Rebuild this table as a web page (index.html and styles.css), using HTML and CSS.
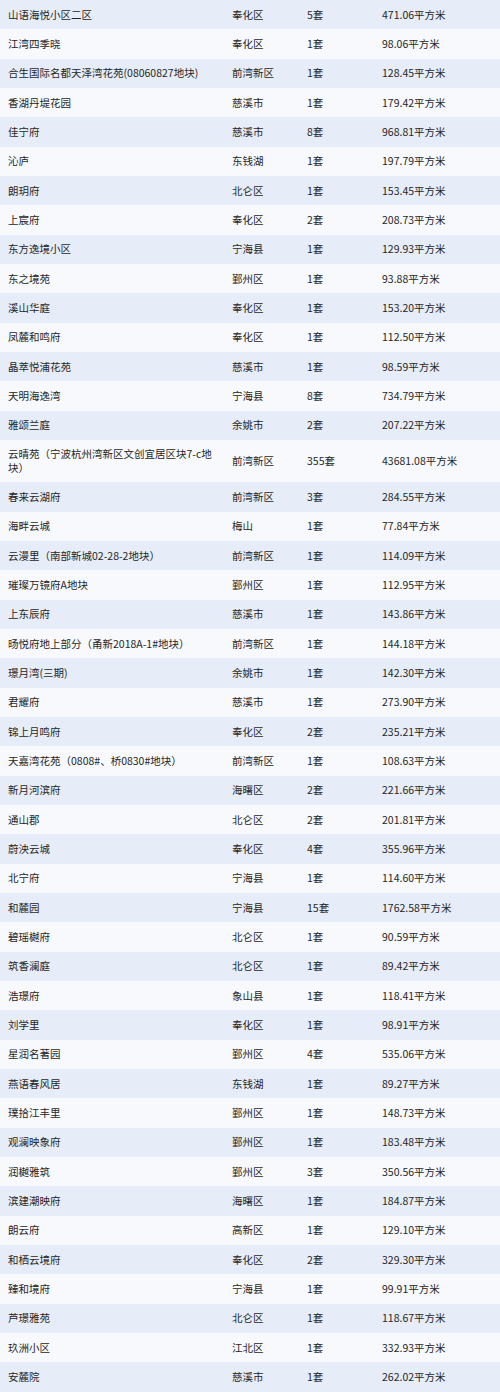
FILE: index.html
```html
<!DOCTYPE html>
<html lang="zh-CN">
<head>
<meta charset="utf-8">
<title>楼盘成交表</title>
<link rel="stylesheet" href="styles.css">
</head>
<body>
<div class="table">
  <div class="row"><div class="name">山语海悦小区二区</div><div>奉化区</div><div>5套</div><div>471.06平方米</div></div>
  <div class="row"><div class="name">江湾四季晓</div><div>奉化区</div><div>1套</div><div>98.06平方米</div></div>
  <div class="row"><div class="name">合生国际名都天泽湾花苑(08060827地块)</div><div>前湾新区</div><div>1套</div><div>128.45平方米</div></div>
  <div class="row"><div class="name">香湖丹堤花园</div><div>慈溪市</div><div>1套</div><div>179.42平方米</div></div>
  <div class="row"><div class="name">佳宁府</div><div>慈溪市</div><div>8套</div><div>968.81平方米</div></div>
  <div class="row"><div class="name">沁庐</div><div>东钱湖</div><div>1套</div><div>197.79平方米</div></div>
  <div class="row"><div class="name">朗玥府</div><div>北仑区</div><div>1套</div><div>153.45平方米</div></div>
  <div class="row"><div class="name">上宸府</div><div>奉化区</div><div>2套</div><div>208.73平方米</div></div>
  <div class="row"><div class="name">东方逸境小区</div><div>宁海县</div><div>1套</div><div>129.93平方米</div></div>
  <div class="row"><div class="name">东之境苑</div><div>鄞州区</div><div>1套</div><div>93.88平方米</div></div>
  <div class="row"><div class="name">溪山华庭</div><div>奉化区</div><div>1套</div><div>153.20平方米</div></div>
  <div class="row"><div class="name">凤麓和鸣府</div><div>奉化区</div><div>1套</div><div>112.50平方米</div></div>
  <div class="row"><div class="name">晶萃悦浦花苑</div><div>慈溪市</div><div>1套</div><div>98.59平方米</div></div>
  <div class="row"><div class="name">天明海逸湾</div><div>宁海县</div><div>8套</div><div>734.79平方米</div></div>
  <div class="row"><div class="name">雅颂兰庭</div><div>余姚市</div><div>2套</div><div>207.22平方米</div></div>
  <div class="row tall"><div class="name">云晴苑（宁波杭州湾新区文创宜居区块7-c地块）</div><div>前湾新区</div><div>355套</div><div>43681.08平方米</div></div>
  <div class="row"><div class="name">春来云湖府</div><div>前湾新区</div><div>3套</div><div>284.55平方米</div></div>
  <div class="row"><div class="name">海畔云城</div><div>梅山</div><div>1套</div><div>77.84平方米</div></div>
  <div class="row"><div class="name">云漫里（南部新城02-28-2地块）</div><div>前湾新区</div><div>1套</div><div>114.09平方米</div></div>
  <div class="row"><div class="name">璀璨万镜府A地块</div><div>鄞州区</div><div>1套</div><div>112.95平方米</div></div>
  <div class="row"><div class="name">上东辰府</div><div>慈溪市</div><div>1套</div><div>143.86平方米</div></div>
  <div class="row"><div class="name">旸悦府地上部分（甬新2018A-1#地块）</div><div>前湾新区</div><div>1套</div><div>144.18平方米</div></div>
  <div class="row"><div class="name">璟月湾(三期)</div><div>余姚市</div><div>1套</div><div>142.30平方米</div></div>
  <div class="row"><div class="name">君耀府</div><div>慈溪市</div><div>1套</div><div>273.90平方米</div></div>
  <div class="row"><div class="name">锦上月鸣府</div><div>奉化区</div><div>2套</div><div>235.21平方米</div></div>
  <div class="row"><div class="name">天嘉湾花苑（0808#、桥0830#地块）</div><div>前湾新区</div><div>1套</div><div>108.63平方米</div></div>
  <div class="row"><div class="name">新月河滨府</div><div>海曙区</div><div>2套</div><div>221.66平方米</div></div>
  <div class="row"><div class="name">通山郡</div><div>北仑区</div><div>2套</div><div>201.81平方米</div></div>
  <div class="row"><div class="name">蔚泱云城</div><div>奉化区</div><div>4套</div><div>355.96平方米</div></div>
  <div class="row"><div class="name">北宁府</div><div>宁海县</div><div>1套</div><div>114.60平方米</div></div>
  <div class="row"><div class="name">和麓园</div><div>宁海县</div><div>15套</div><div>1762.58平方米</div></div>
  <div class="row"><div class="name">碧瑶樾府</div><div>北仑区</div><div>1套</div><div>90.59平方米</div></div>
  <div class="row"><div class="name">筑香澜庭</div><div>北仑区</div><div>1套</div><div>89.42平方米</div></div>
  <div class="row"><div class="name">浩璟府</div><div>象山县</div><div>1套</div><div>118.41平方米</div></div>
  <div class="row"><div class="name">刘学里</div><div>奉化区</div><div>1套</div><div>98.91平方米</div></div>
  <div class="row"><div class="name">星润名著园</div><div>鄞州区</div><div>4套</div><div>535.06平方米</div></div>
  <div class="row"><div class="name">燕语春风居</div><div>东钱湖</div><div>1套</div><div>89.27平方米</div></div>
  <div class="row"><div class="name">璞拾江丰里</div><div>鄞州区</div><div>1套</div><div>148.73平方米</div></div>
  <div class="row"><div class="name">观澜映象府</div><div>鄞州区</div><div>1套</div><div>183.48平方米</div></div>
  <div class="row"><div class="name">润樾雅筑</div><div>鄞州区</div><div>3套</div><div>350.56平方米</div></div>
  <div class="row"><div class="name">滨建潮映府</div><div>海曙区</div><div>1套</div><div>184.87平方米</div></div>
  <div class="row"><div class="name">朗云府</div><div>高新区</div><div>1套</div><div>129.10平方米</div></div>
  <div class="row"><div class="name">和栖云境府</div><div>奉化区</div><div>2套</div><div>329.30平方米</div></div>
  <div class="row"><div class="name">臻和境府</div><div>宁海县</div><div>1套</div><div>99.91平方米</div></div>
  <div class="row"><div class="name">芦璟雅苑</div><div>北仑区</div><div>1套</div><div>118.67平方米</div></div>
  <div class="row"><div class="name">玖洲小区</div><div>江北区</div><div>1套</div><div>332.93平方米</div></div>
  <div class="row"><div class="name">安麓院</div><div>慈溪市</div><div>1套</div><div>262.02平方米</div></div>
</div>
</body>
</html>
```

FILE: styles.css
```css
html, body {
  margin: 0;
  padding: 0;
  background: #f7f9fd;
}

body {
  font-family: "Noto Sans CJK SC", "Noto Sans", sans-serif;
  font-size: 10.5px;
  color: #262626;
}

.table {
  display: flex;
  flex-direction: column;
}

.row {
  display: grid;
  grid-template-columns: 224px 75px 75px 1fr;
  align-items: center;
  height: 29.35px;
  padding-left: 8px;
  line-height: 14px;
  background: #f7f9fd;
}

.row:nth-child(odd) {
  background: #e6edf8;
}

.row.tall {
  height: 42px;
}

.name {
  padding-right: 12px;
}
```
